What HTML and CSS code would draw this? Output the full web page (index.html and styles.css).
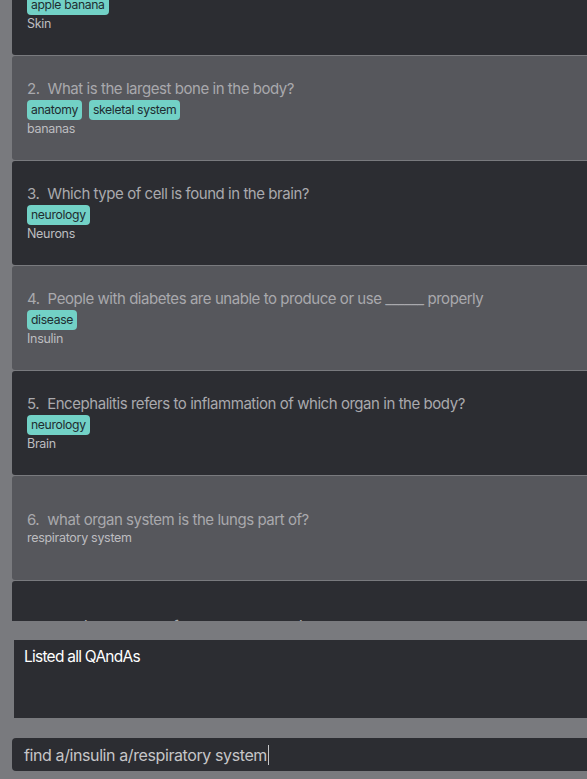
FILE: index.html
```html
<!DOCTYPE html>
<html>
<head>
<meta charset="utf-8">
<link rel="stylesheet" href="styles.css">
</head>
<body>
<div class="app">
  <div class="list-viewport">
    <div class="list">
      <div class="card dark">
        <div class="q"><span class="num">1.</span>What is the largest organ in the body?</div>
        <div class="tags"><span class="tag">apple banana</span></div>
        <div class="a">Skin</div>
      </div>
      <div class="card light">
        <div class="q"><span class="num">2.</span>What is the largest bone in the body?</div>
        <div class="tags"><span class="tag">anatomy</span><span class="tag">skeletal system</span></div>
        <div class="a">bananas</div>
      </div>
      <div class="card dark">
        <div class="q"><span class="num">3.</span>Which type of cell is found in the brain?</div>
        <div class="tags"><span class="tag">neurology</span></div>
        <div class="a">Neurons</div>
      </div>
      <div class="card light">
        <div class="q"><span class="num">4.</span>People with diabetes are unable to produce or use ______ properly</div>
        <div class="tags"><span class="tag">disease</span></div>
        <div class="a">Insulin</div>
      </div>
      <div class="card dark">
        <div class="q"><span class="num">5.</span>Encephalitis refers to inflammation of which organ in the body?</div>
        <div class="tags"><span class="tag">neurology</span></div>
        <div class="a">Brain</div>
      </div>
      <div class="card light">
        <div class="q"><span class="num">6.</span>what organ system is the lungs part of?</div>
        <div class="a">respiratory system</div>
      </div>
      <div class="card dark tall">
        <div class="q"><span class="num">7.</span>What is the name of the largest artery in the body?</div>
        <div class="tags"><span class="tag">anatomy</span></div>
        <div class="a">Aorta</div>
      </div>
    </div>
  </div>
  <div class="result">Listed all QAndAs</div>
  <div class="command"><span class="cmd-text">find a/insulin a/respiratory system</span><span class="caret"></span></div>
</div>
</body>
</html>
```
FILE: styles.css
```css
html, body {
  margin: 0;
  padding: 0;
  background: #797a7e;
  overflow: hidden;
  width: 587px;
  height: 779px;
}
.app {
  font-family: Inter, "Liberation Sans", sans-serif;
  display: flex;
  flex-direction: column;
  padding-left: 12px;
}
.list-viewport {
  height: 621px;
  overflow: hidden;
}
.list {
  margin-top: -49px;
  display: flex;
  flex-direction: column;
  gap: 1px;
  width: 600px;
}
.card {
  height: 104px;
  flex: none;
  box-sizing: border-box;
  border-radius: 3px;
  padding-left: 15px;
  display: flex;
  flex-direction: column;
  justify-content: center;
}
.card.tall { height: 130px; }
.card.dark { background: #2c2d32; }
.card.light { background: #56575c; }
.q {
  font-size: 15px;
  color: #a9a9ad;
  letter-spacing: -0.45px;
  line-height: 18px;
  white-space: nowrap;
}
.num { margin-right: 8px; }
.tags {
  display: flex;
  gap: 7px;
  margin-top: 2px;
}
.tag {
  background: #72d1c6;
  color: #1e2c30;
  font-size: 12.2px;
  letter-spacing: -0.35px;
  line-height: 20px;
  height: 20px;
  padding: 0 4px;
  border-radius: 4px;
}
.a {
  font-size: 12.5px;
  color: #bdbdc0;
  letter-spacing: -0.3px;
  line-height: 16px;
  margin-top: 1px;
}
.result {
  margin-top: 19px;
  margin-left: 2px;
  height: 78px;
  background: #2c2d32;
  color: #ffffff;
  font-size: 15.5px;
  letter-spacing: -0.75px;
  padding: 8px 10px;
  box-sizing: border-box;
  line-height: 18px;
}
.command {
  margin-top: 20px;
  height: 33px;
  background: #2c2d32;
  border-radius: 4px 0 0 4px;
  display: flex;
  align-items: center;
  padding-left: 12px;
}
.cmd-text {
  font-size: 16px;
  letter-spacing: -0.4px;
  color: #c6c6c8;
}
.caret {
  width: 1px;
  height: 20px;
  background: #c6c6c8;
  margin-left: 1px;
}
```
